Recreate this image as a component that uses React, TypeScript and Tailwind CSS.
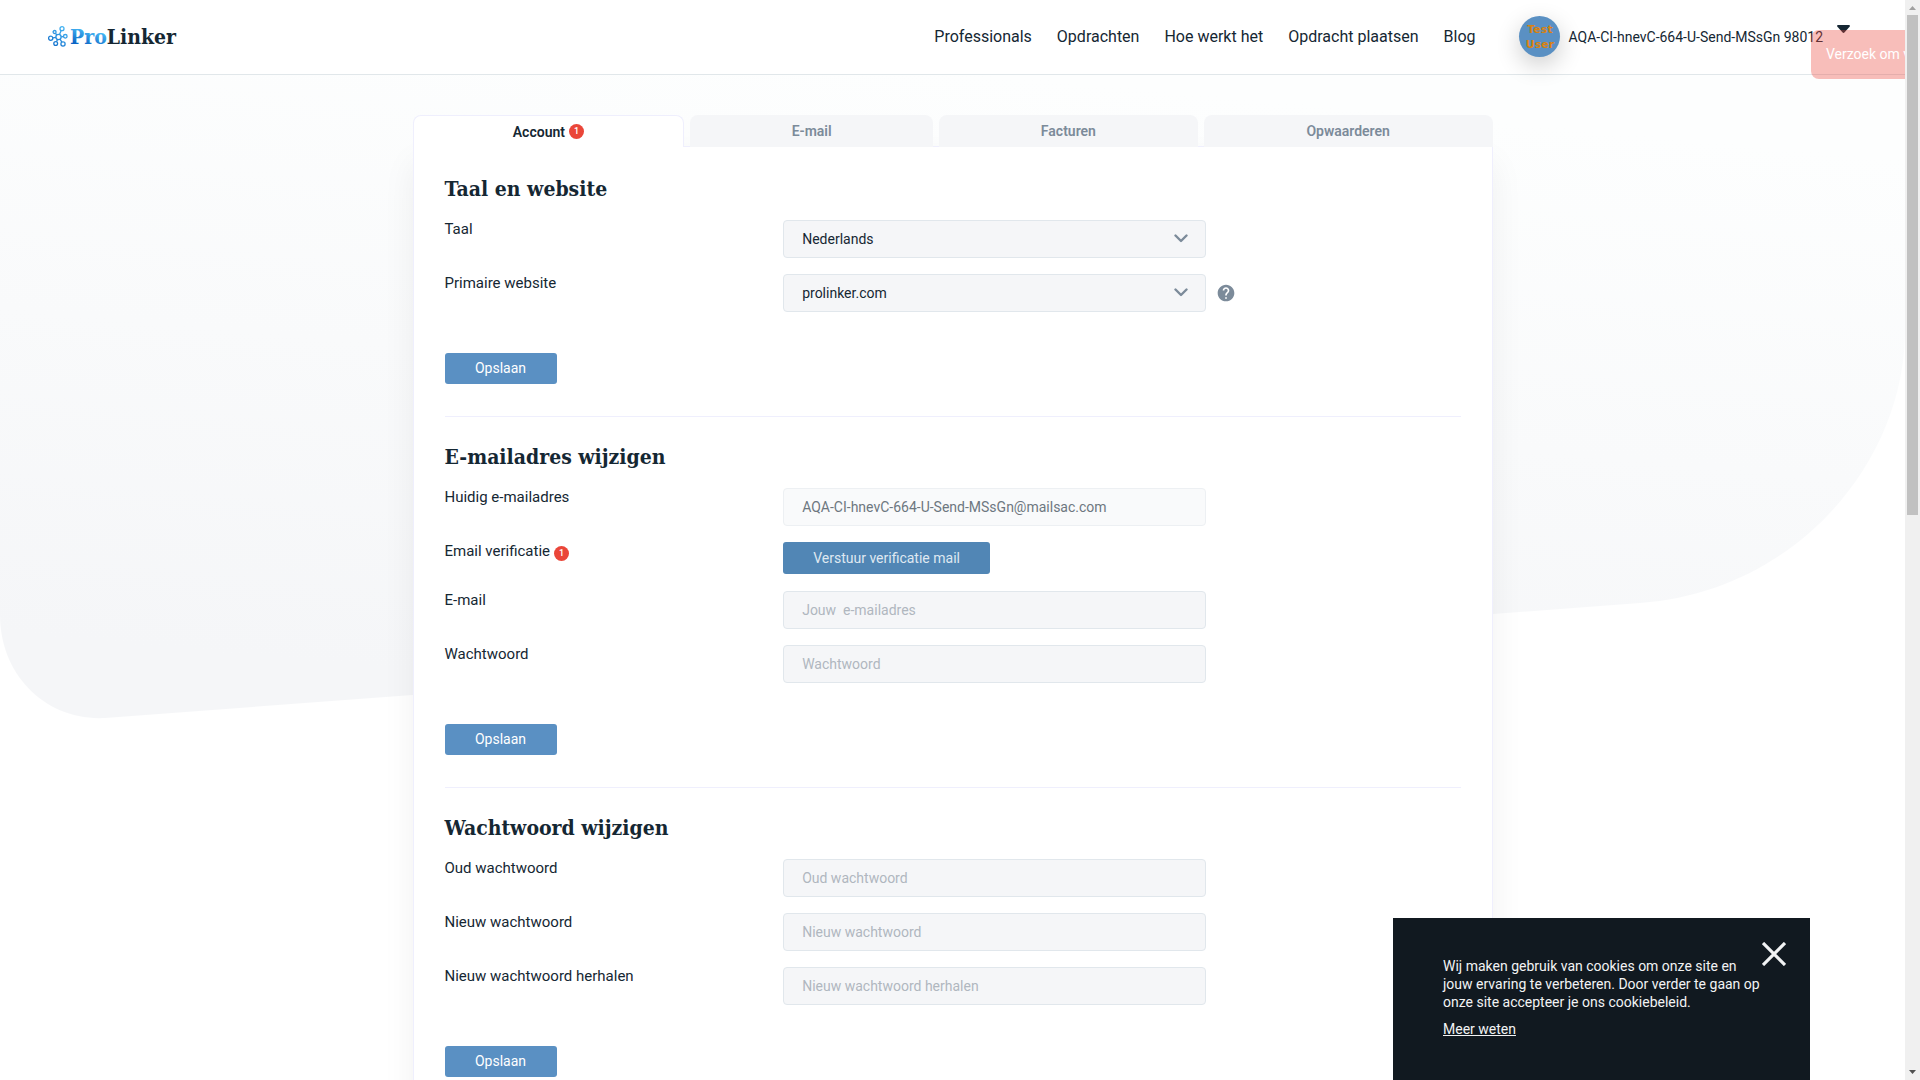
import React from "react";
import { MdHelp } from "react-icons/md";

const navItems = ["Professionals", "Opdrachten", "Hoe werkt het", "Opdracht plaatsen", "Blog"];

const fieldClass =
  "h-[38px] w-full rounded border border-[#e1e7ec] bg-[#f5f6f8] px-[18px] text-sm text-[#152733] placeholder:text-[#b0b7bf] focus:outline-none";

function Badge() {
  return (
    <span className="inline-flex size-[15px] items-center justify-center rounded-full bg-[#ea4639] text-[9px] font-medium leading-none text-white">
      1
    </span>
  );
}

function Logo() {
  return (
    <a href="#" aria-label="ProLinker" className="flex items-center gap-0.5">
      <svg width="20" height="21" viewBox="0 0 20 21" fill="none" strokeWidth="1.3">
        <defs>
          <linearGradient id="logo" x1="0" y1="21" x2="14" y2="0" gradientUnits="userSpaceOnUse">
            <stop stopColor="#0a63c4" />
            <stop offset="1" stopColor="#45b5f3" />
          </linearGradient>
        </defs>
        <g stroke="url(#logo)">
          <circle cx="10.5" cy="11" r="2.6" />
          <circle cx="14" cy="2.7" r="2" />
          <circle cx="17.3" cy="10.3" r="1.8" />
          <circle cx="15" cy="18" r="2.1" />
          <circle cx="7.7" cy="17.5" r="1.9" />
          <circle cx="2.7" cy="12.2" r="2.1" />
          <circle cx="6.6" cy="6" r="1.5" />
          <path d="M11.5 8.5l1.7-3.9M13.1 10.8l2.4-.3M12 13.2l1.9 3M9.5 13.4l-1 2.4M7.9 11.4l-3.1.5M8.8 9l-1.3-1.7" />
        </g>
      </svg>
      <svg width="110" height="24" viewBox="0 0 110 24" role="img" aria-label="ProLinker">
        <defs>
          <linearGradient id="word" x1="10" y1="20" x2="14" y2="4" gradientUnits="userSpaceOnUse">
            <stop stopColor="#0a63c4" />
            <stop offset="1" stopColor="#45b5f3" />
          </linearGradient>
        </defs>
        <text x="0" y="19" fontSize="21" fontWeight="700" className="font-['Roboto_Slab','DejaVu_Serif_Condensed','DejaVu_Serif',serif]">
          <tspan fill="url(#word)">Pro</tspan>
          <tspan fill="#152733">Linker</tspan>
        </text>
      </svg>
    </a>
  );
}

function Header() {
  return (
    <header className="relative flex h-[75px] shrink-0 items-center border-b border-[#e1e7ea] bg-white pb-px pl-12 pr-[55px]">
      <Logo />
      <nav className="ml-auto flex gap-[25px] text-base">
        {navItems.map((item) => (
          <a key={item} href="#">
            {item}
          </a>
        ))}
      </nav>
      <button type="button" className="ml-11 flex items-center text-sm">
        <span className="flex size-[41px] items-center justify-center rounded-full bg-[#5a90c3] font-['DejaVu_Sans',sans-serif] text-[11px] font-bold leading-[15px] text-[#d9820f] shadow-[0_8px_24px_rgba(0,0,0,0.2)]">
          Test
          <br />
          User
        </span>
        <span className="ml-2">AQA-CI-hnevC-664-U-Send-MSsGn 98012</span>
        <svg className="mb-4 ml-[14px]" width="13" height="8" viewBox="0 0 13 8" fill="#152733">
          <path d="M1.2 0h10.6c1 0 1.4 1 .8 1.7L7.6 7.3a1.5 1.5 0 0 1-2.2 0L.4 1.7C-.2 1 .2 0 1.2 0z" />
        </svg>
      </button>
    </header>
  );
}

function Tab({ label, width, active = false }: { label: string; width: string; active?: boolean }) {
  return (
    <button
      type="button"
      role="tab"
      aria-selected={active}
      className={
        "flex h-8 items-center justify-center gap-1 rounded-t-lg text-sm font-semibold " +
        width +
        (active
          ? " relative z-10 -mb-px border border-b-0 border-[#efeffd] bg-white text-[#152733]"
          : " bg-[#f5f6f8] text-[#7c8b9a]")
      }
    >
      {label}
      {active && <Badge />}
    </button>
  );
}

function Row({
  label,
  id,
  badge = false,
  extra,
  children,
}: {
  label: string;
  id: string;
  badge?: boolean;
  extra?: React.ReactNode;
  children: React.ReactNode;
}) {
  return (
    <div className="grid grid-cols-12">
      <label htmlFor={id} className="col-span-4 flex items-start gap-1 text-[15px] leading-[18px]">
        {label}
        {badge && (
          <span className="mt-1 flex">
            <Badge />
          </span>
        )}
      </label>
      <div className="col-span-5">{children}</div>
      {extra && <div className="col-span-3 flex items-center pl-[10px]">{extra}</div>}
    </div>
  );
}

function SelectField({ id, options }: { id: string; options: string[] }) {
  return (
    <div className="relative">
      <select id={id} className={fieldClass + " block appearance-none"}>
        {options.map((o) => (
          <option key={o}>{o}</option>
        ))}
      </select>
      <svg
        className="pointer-events-none absolute right-[18px] top-[14px]"
        width="14"
        height="9"
        viewBox="0 0 14 9"
        fill="none"
        stroke="#7c8b9a"
        strokeWidth="2.4"
        strokeLinecap="round"
        strokeLinejoin="round"
      >
        <path d="M1.5 1.5L7 7l5.500-5.500" />
      </svg>
    </div>
  );
}

function Section({ title, children }: { title: string; children: React.ReactNode }) {
  return (
    <section className="border-b border-[#efeffd] pb-8 pt-6">
      <h2 className="font-['Roboto_Slab','DejaVu_Serif_Condensed','DejaVu_Serif',serif] text-[21px] font-bold leading-8">
        {title}
      </h2>
      <form className="mt-[15px]" onSubmit={(e) => e.preventDefault()}>
        <div className="flex flex-col gap-4">{children}</div>
        <button type="submit" className="mt-[41px] block h-[31px] w-28 rounded-[3px] bg-[#5a90c3] pb-px text-sm text-white">
          Opslaan
        </button>
      </form>
    </section>
  );
}

function Backdrop() {
  return (
    <svg
      className="absolute inset-x-0 top-0 h-[720px] w-full"
      viewBox="0 0 1905 720"
      preserveAspectRatio="none"
      aria-hidden="true"
    >
      <defs>
        <linearGradient id="bg" x1="1000" y1="75" x2="940" y2="720" gradientUnits="userSpaceOnUse">
          <stop stopColor="#fdfefe" />
          <stop offset="1" stopColor="#f5f6f8" />
        </linearGradient>
      </defs>
      <path d="M0 0H1905V330C1905 463 1795 592 1640 603L105 718C46 721 0 675 0 615z" fill="url(#bg)" />
    </svg>
  );
}

function CookieNotice() {
  return (
    <aside className="absolute bottom-0 right-[95px] z-20 h-[162px] w-[417px] bg-[#111920] py-[39px] pl-[50px] pr-12 text-sm leading-[18px] text-[#f2f3f4]">
      <button type="button" aria-label="Sluiten" className="absolute right-6 top-6">
        <svg width="24" height="24" viewBox="0 0 24 24" stroke="#f2f3f4" strokeWidth="3.200">
          <path d="M1 1l22 22M23 1L1 23" />
        </svg>
      </button>
      <p>
        Wij maken gebruik van cookies om onze site en
        <br />
        jouw ervaring te verbeteren. Door verder te gaan op
        <br />
        onze site accepteer je ons cookiebeleid.
      </p>
      <a href="#" className="mt-[9px] inline-block underline">
        Meer weten
      </a>
    </aside>
  );
}

function Scrollbar() {
  return (
    <div className="flex w-[15px] shrink-0 flex-col items-center bg-[#f0f0f0]" aria-hidden="true">
      <svg width="15" height="15" viewBox="0 0 15 15" fill="#a0a0a0">
        <path d="M4 10h7L7.500 6z" />
      </svg>
      <div className="h-[500px] w-[11px] bg-[#c1c1c1]" />
      <svg className="mt-auto" width="15" height="15" viewBox="0 0 15 15" fill="#505050">
        <path d="M4 5h7L7.500 9z" />
      </svg>
    </div>
  );
}

export default function App() {
  return (
    <div className="flex h-screen overflow-hidden bg-white font-[Roboto,sans-serif] text-[#152733]">
      <div className="relative flex min-w-0 flex-1 flex-col overflow-hidden">
        <Backdrop />
        <Header />
        <main className="relative mx-auto mt-10 w-full max-w-[1080px]">
          <div className="relative z-10 flex gap-1.5" role="tablist">
            <Tab label="Account" width="flex-[270]" active />
            <Tab label="E-mail" width="flex-[243]" />
            <Tab label="Facturen" width="flex-[259]" />
            <Tab label="Opwaarderen" width="flex-[289]" />
          </div>
          <div className="-mt-px border border-[#efeffd] bg-white px-[31px] pt-0.5 shadow-[0_16px_32px_rgba(0,0,0,0.06)]">
            <Section title="Taal en website">
              <Row label="Taal" id="lang">
                <SelectField id="lang" options={["Nederlands", "English"]} />
              </Row>
              <Row
                label="Primaire website"
                id="site"
                extra={
                  <button type="button" aria-label="Help">
                    <MdHelp size={20} color="#7c8b9a" />
                  </button>
                }
              >
                <SelectField id="site" options={["prolinker.com"]} />
              </Row>
            </Section>
            <Section title="E-mailadres wijzigen">
              <Row label="Huidig e-mailadres" id="current">
                <input
                  id="current"
                  type="email"
                  disabled
                  defaultValue="AQA-CI-hnevC-664-U-Send-MSsGn@mailsac.com"
                  className="block h-[38px] w-full rounded border border-[#edf0f3] bg-[#f9fafb] px-[18px] text-sm text-[#6d7780]"
                />
              </Row>
              <Row label="Email verificatie" id="verify" badge>
                <button id="verify" type="button" className="mb-px block h-8 rounded-[3px] bg-[#5186b5] px-[30px] pb-px text-sm text-[#dfe8f1]">
                  Verstuur verificatie mail
                </button>
              </Row>
              <Row label="E-mail" id="email">
                <input id="email" type="email" placeholder="Jouw  e-mailadres" className={fieldClass + " block"} />
              </Row>
              <Row label="Wachtwoord" id="password">
                <input id="password" type="password" placeholder="Wachtwoord" className={fieldClass + " block"} />
              </Row>
            </Section>
            <Section title="Wachtwoord wijzigen">
              <Row label="Oud wachtwoord" id="old">
                <input id="old" type="password" placeholder="Oud wachtwoord" className={fieldClass + " block"} />
              </Row>
              <Row label="Nieuw wachtwoord" id="new">
                <input id="new" type="password" placeholder="Nieuw wachtwoord" className={fieldClass + " block"} />
              </Row>
              <Row label="Nieuw wachtwoord herhalen" id="repeat">
                <input id="repeat" type="password" placeholder="Nieuw wachtwoord herhalen" className={fieldClass + " block"} />
              </Row>
            </Section>
          </div>
        </main>
        <div
          role="alert"
          className="absolute left-full top-[30px] z-30 -ml-[94px] whitespace-nowrap rounded-lg bg-[#ea4639]/35 px-[15px] py-[14px] text-sm leading-[21px] text-white"
        >
          Verzoek om verificatie
        </div>
        <CookieNotice />
      </div>
      <Scrollbar />
    </div>
  );
}
